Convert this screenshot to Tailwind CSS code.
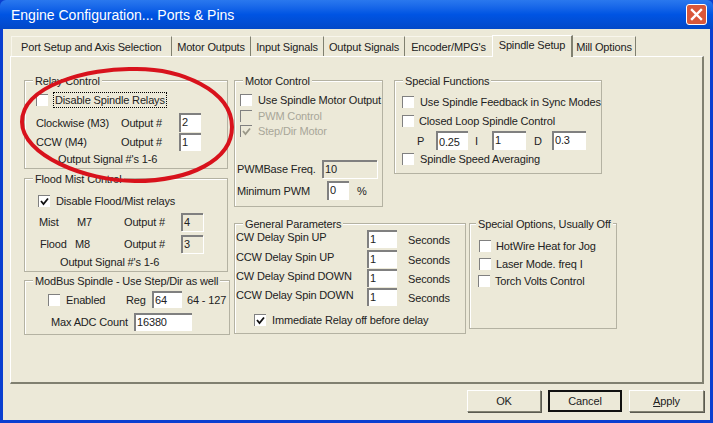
<!DOCTYPE html>
<html lang="en">
<head>
    <meta charset="UTF-8">
    <title>Engine Configuration... Ports &amp; Pins</title>
    <script src="https://cdn.jsdelivr.net/npm/@tailwindcss/browser@4"></script>
</head>
<body class="bg-[#0a3fd0]">
<div class="relative w-[713px] h-[423px] overflow-hidden whitespace-nowrap font-['Liberation_Sans',sans-serif] text-[11px] tracking-[-0.15px] leading-[14px] text-[#222]">
    <!-- Title bar -->
    <div class="h-[29px] flex items-center justify-between pl-[11px] pr-[6px] rounded-t-[6px] bg-gradient-to-b from-[#2a78ee] via-[#0054e3] to-[#0248c8]">
        <span class="text-white text-[14px] tracking-normal">Engine Configuration... Ports &amp; Pins</span>
        <div class="w-[21px] h-[21px] rounded-[3px] border border-white bg-[#d9573a] flex items-center justify-center">
            <svg width="13" height="13" viewBox="0 0 13 13"><path d="M2 2 L11 11 M11 2 L2 11" stroke="#fff" stroke-width="2.4" stroke-linecap="square"/></svg>
        </div>
    </div>

    <!-- Client area -->
    <div class="mx-[3px] h-[391px] bg-[#ece9d8]">
        <!-- Tabs -->
        <div class="flex items-end h-[27px] pl-[8px]">
            <div class="w-[161px] h-[20px] flex items-center pl-[9px] border-t border-l border-t-[#f8f6ec] border-l-[#f8f6ec] border-r border-r-[#808070]">Port Setup and Axis Selection</div>
            <div class="w-[79px] h-[20px] flex items-center justify-center border-t border-t-[#f8f6ec] border-r border-r-[#808070]">Motor Outputs</div>
            <div class="w-[73px] h-[20px] flex items-center justify-center border-t border-t-[#f8f6ec] border-r border-r-[#808070]">Input Signals</div>
            <div class="w-[81px] h-[20px] flex items-center justify-center border-t border-t-[#f8f6ec] border-r border-r-[#808070]">Output Signals</div>
            <div class="w-[87px] h-[20px] flex items-center justify-center border-t border-t-[#f8f6ec]">Encoder/MPG's</div>
            <div class="relative z-10 w-[81px] h-[22px] -mb-px pb-[4px] flex items-center justify-center border-t border-l border-white border-r-2 border-r-[#808070] bg-[#ece9d8]">Spindle Setup</div>
            <div class="w-[63px] h-[20px] flex items-center justify-center border-t border-t-[#f8f6ec] border-r border-r-[#808070]">Mill Options</div>
        </div>

        <!-- Tab page -->
        <div class="ml-[7px] w-[694px] h-[328px] flex pt-[23px] pl-[13px] border-t border-l border-white border-r-2 border-b-2 border-r-[#808070] border-b-[#808070]">
            <!-- Left column -->
            <div class="w-[206px] flex flex-col">
                <div class="relative w-[204px] h-[89px] border border-[#b4b2a2] pl-[11px] shadow-[inset_1px_1px_0_#fff]">
                    <span class="absolute -top-[7px] left-[8px] px-[2px] bg-[#ece9d8]">Relay Control</span>
                    <div class="flex items-center h-[15px] mt-[11px]">
                        <div class="shrink-0 w-[12px] h-[12px] bg-white border-t border-l border-[#808080]"></div>
                        <span class="ml-[5px] border border-dotted border-black px-[1px]">Disable Spindle Relays</span>
                    </div>
                    <div class="flex items-center h-[19px] mt-[6px]">
                        <span class="w-[85px]">Clockwise (M3)</span>
                        <span class="w-[58px]">Output #</span>
                        <div class="w-[22px] h-[19px] bg-white border-t-2 border-l-2 border-[#808080] pl-[1px]">2</div>
                    </div>
                    <div class="flex items-center h-[18px] mt-[1px]">
                        <span class="w-[85px]">CCW (M4)</span>
                        <span class="w-[58px]">Output #</span>
                        <div class="w-[22px] h-[18px] bg-white border-t-2 border-l-2 border-[#808080] pl-[1px]">1</div>
                    </div>
                    <div class="pl-[22px] mt-[1px]">Output Signal #'s 1-6</div>
                </div>

                <div class="relative mt-[9px] w-[204px] h-[94px] border border-[#b4b2a2] pl-[13px] shadow-[inset_1px_1px_0_#fff]">
                    <span class="absolute -top-[7px] left-[8px] px-[2px] bg-[#ece9d8]">Flood Mist Control</span>
                    <div class="flex items-center h-[15px] mt-[14px]">
                        <div class="shrink-0 w-[12px] h-[12px] bg-white border-t border-l border-[#808080] flex items-center justify-center">
                            <svg width="9" height="9" viewBox="0 0 9 9"><path d="M1 4 L3.5 7 L8 1.5" fill="none" stroke="#111" stroke-width="1.8"/></svg>
                        </div>
                        <span class="ml-[6px]">Disable Flood/Mist relays</span>
                    </div>
                    <div class="flex items-center h-[18px] mt-[5px] pl-[1px]">
                        <span class="w-[38px]">Mist</span>
                        <span class="w-[47px]">M7</span>
                        <span class="w-[57px]">Output #</span>
                        <div class="w-[22px] h-[18px] border-t-2 border-l-2 border-[#808080] shadow-[1px_1px_0_#fff] pl-[1px]">4</div>
                    </div>
                    <div class="flex items-center h-[18px] mt-[4px] pl-[2px]">
                        <span class="w-[35px]">Flood</span>
                        <span class="w-[49px]">M8</span>
                        <span class="w-[57px]">Output #</span>
                        <div class="w-[22px] h-[18px] border-t-2 border-l-2 border-[#808080] shadow-[1px_1px_0_#fff] pl-[1px]">3</div>
                    </div>
                    <div class="pl-[22px] mt-[2px]">Output Signal #'s 1-6</div>
                </div>

                <div class="relative mt-[8px] w-[206px] h-[55px] border border-[#b4b2a2] shadow-[inset_1px_1px_0_#fff]">
                    <span class="absolute -top-[7px] left-[8px] px-[2px] bg-[#ece9d8]">ModBus Spindle - Use Step/Dir as well</span>
                    <div class="flex items-center h-[17px] mt-[10px] pl-[23px]">
                        <div class="shrink-0 w-[12px] h-[12px] bg-white border-t border-l border-[#808080]"></div>
                        <span class="ml-[6px] w-[60px]">Enabled</span>
                        <span class="w-[26px]">Reg</span>
                        <div class="w-[30px] h-[17px] bg-white border-t-2 border-l-2 border-[#808080] pl-[1px]">64</div>
                        <span class="ml-[5px]">64 - 127</span>
                    </div>
                    <div class="flex items-center h-[18px] mt-[5px] pl-[26px]">
                        <span class="w-[83px]">Max ADC Count</span>
                        <div class="w-[58px] h-[18px] bg-white border-t-2 border-l-2 border-[#808080] pl-[1px]">16380</div>
                    </div>
                </div>
            </div>

            <!-- Right part -->
            <div class="ml-[4px]">
                <div class="flex h-[143px]">
                    <div class="relative w-[149px] h-[127px] border border-[#b4b2a2] pl-[5px] shadow-[inset_1px_1px_0_#fff]">
                        <span class="absolute -top-[7px] left-[8px] px-[2px] bg-[#ece9d8]">Motor Control</span>
                        <div class="flex items-center h-[15px] mt-[11px]">
                            <div class="shrink-0 w-[12px] h-[12px] bg-white border-t border-l border-[#808080]"></div>
                            <span class="ml-[6px]">Use Spindle Motor Output</span>
                        </div>
                        <div class="flex items-center h-[15px] mt-[1px] text-[#a8a698]">
                            <div class="shrink-0 w-[12px] h-[12px] border-t border-l border-[#808080]"></div>
                            <span class="ml-[6px]">PWM Control</span>
                        </div>
                        <div class="flex items-center h-[15px] text-[#a8a698]">
                            <div class="shrink-0 w-[12px] h-[12px] border-t border-l border-[#808080] flex items-center justify-center">
                                <svg width="9" height="9" viewBox="0 0 9 9"><path d="M1 4 L3.5 7 L8 1.5" fill="none" stroke="#9a9888" stroke-width="1.8"/></svg>
                            </div>
                            <span class="ml-[6px]">Step/Dir Motor</span>
                        </div>
                        <div class="flex items-center h-[18px] mt-[22px] -ml-[3px]">
                            <span class="w-[85px]">PWMBase Freq.</span>
                            <div class="w-[55px] h-[18px] border-t-2 border-l-2 border-[#808080] shadow-[1px_1px_0_#fff] pl-[1px]">10</div>
                        </div>
                        <div class="flex items-center h-[19px] mt-[3px] -ml-[3px]">
                            <span class="w-[90px]">Minimum PWM</span>
                            <div class="w-[22px] h-[19px] bg-white border-t-2 border-l-2 border-[#808080] pl-[1px]">0</div>
                            <span class="ml-[8px]">%</span>
                        </div>
                    </div>

                    <div class="relative ml-[11px] w-[208px] h-[94px] border border-[#b4b2a2] pl-[7px] shadow-[inset_1px_1px_0_#fff]">
                        <span class="absolute -top-[7px] left-[8px] px-[2px] bg-[#ece9d8]">Special Functions</span>
                        <div class="flex items-center h-[15px] mt-[13px]">
                            <div class="shrink-0 w-[12px] h-[12px] bg-white border-t border-l border-[#808080]"></div>
                            <span class="ml-[6px]">Use Spindle Feedback in Sync Modes</span>
                        </div>
                        <div class="flex items-center h-[15px] mt-[4px]">
                            <div class="shrink-0 w-[12px] h-[12px] bg-white border-t border-l border-[#808080]"></div>
                            <span class="ml-[5px]">Closed Loop Spindle Control</span>
                        </div>
                        <div class="flex items-center h-[19px] mt-[3px] pl-[15px]">
                            <span class="w-[19px]">P</span>
                            <div class="w-[32px] h-[19px] bg-white border-t-2 border-l-2 border-[#808080] pl-[1px] pt-[2px]">0.25</div>
                            <span class="ml-[7px] w-[17px]">I</span>
                            <div class="w-[34px] h-[19px] bg-white border-t-2 border-l-2 border-[#808080] pl-[1px]">1</div>
                            <span class="ml-[8px] w-[18px]">D</span>
                            <div class="w-[34px] h-[19px] bg-white border-t-2 border-l-2 border-[#808080] pl-[1px]">0.3</div>
                        </div>
                        <div class="flex items-center h-[15px] mt-[1px]">
                            <div class="shrink-0 w-[12px] h-[12px] bg-white border-t border-l border-[#808080]"></div>
                            <span class="ml-[6px]">Spindle Speed Averaging</span>
                        </div>
                    </div>
                </div>

                <div class="flex">
                    <div class="relative w-[232px] h-[111px] border border-[#b4b2a2] pl-[1px] shadow-[inset_1px_1px_0_#fff]">
                        <span class="absolute -top-[7px] left-[8px] px-[2px] bg-[#ece9d8]">General Parameters</span>
                        <div class="flex h-[18px] mt-[6px]">
                            <span class="w-[131px]">CW Delay Spin UP</span>
                            <div class="w-[30px] h-[18px] bg-white border-t-2 border-l-2 border-[#808080] pl-[1px]">1</div>
                            <span class="ml-[11px] mt-[3px]">Seconds</span>
                        </div>
                        <div class="flex h-[18px] mt-[2px]">
                            <span class="w-[131px]">CCW Delay Spin UP</span>
                            <div class="w-[30px] h-[18px] bg-white border-t-2 border-l-2 border-[#808080] pl-[1px]">1</div>
                            <span class="ml-[11px] mt-[3px]">Seconds</span>
                        </div>
                        <div class="flex h-[18px] mt-[1px]">
                            <span class="w-[131px]">CW Delay Spind DOWN</span>
                            <div class="w-[30px] h-[18px] bg-white border-t-2 border-l-2 border-[#808080] pl-[1px]">1</div>
                            <span class="ml-[11px] mt-[3px]">Seconds</span>
                        </div>
                        <div class="flex h-[18px] mt-[1px]">
                            <span class="w-[131px]">CCW Delay Spin DOWN</span>
                            <div class="w-[30px] h-[18px] bg-white border-t-2 border-l-2 border-[#808080] pl-[1px]">1</div>
                            <span class="ml-[11px] mt-[3px]">Seconds</span>
                        </div>
                        <div class="flex items-center h-[15px] mt-[6px] pl-[18px]">
                            <div class="shrink-0 w-[12px] h-[12px] bg-white border-t border-l border-[#808080] flex items-center justify-center">
                                <svg width="9" height="9" viewBox="0 0 9 9"><path d="M1 4 L3.5 7 L8 1.5" fill="none" stroke="#111" stroke-width="1.8"/></svg>
                            </div>
                            <span class="ml-[6px]">Immediate Relay off before delay</span>
                        </div>
                    </div>

                    <div class="relative ml-[3px] w-[148px] h-[106px] border border-[#b4b2a2] pl-[9px] shadow-[inset_1px_1px_0_#fff]">
                        <span class="absolute -top-[7px] left-[6px] px-[2px] bg-[#ece9d8]">Special Options, Usually Off</span>
                        <div class="flex items-center h-[15px] mt-[14px]">
                            <div class="shrink-0 w-[12px] h-[12px] bg-white border-t border-l border-[#808080]"></div>
                            <span class="ml-[5px]">HotWire Heat for Jog</span>
                        </div>
                        <div class="flex items-center h-[15px] mt-[3px]">
                            <div class="shrink-0 w-[12px] h-[12px] bg-white border-t border-l border-[#808080]"></div>
                            <span class="ml-[5px]">Laser Mode. freq I</span>
                        </div>
                        <div class="flex items-center h-[15px] mt-[2px] -ml-[1px]">
                            <div class="shrink-0 w-[12px] h-[12px] bg-white border-t border-l border-[#808080]"></div>
                            <span class="ml-[5px]">Torch Volts Control</span>
                        </div>
                    </div>
                </div>
            </div>
        </div>

        <!-- Buttons -->
        <div class="flex justify-end gap-[7px] pt-[6px] pr-[6px]">
            <div class="w-[74px] h-[22px] flex items-center justify-center border border-t-white border-l-white border-r-[#808070] border-b-[#808070] shadow-[1px_1px_0_#5a5a50]">OK</div>
            <div class="w-[74px] h-[22px] flex items-center justify-center border-2 border-[#111]">Cancel</div>
            <div class="w-[75px] h-[22px] flex items-center justify-center border border-t-white border-l-white border-r-[#808070] border-b-[#808070] shadow-[1px_1px_0_#5a5a50]"><span><span class="underline">A</span>pply</span></div>
        </div>
    </div>

    <!-- Red hand-drawn ellipse over the screenshot -->
    <svg class="absolute left-0 top-0 pointer-events-none" width="713" height="423" viewBox="0 0 713 423">
        <path d="M133 69 C90 68 22 85 22 122 C22 155 85 181 135 181 C190 181 232 160 232 127 C232 90 180 68 133 69 Z" fill="none" stroke="#d8121c" stroke-width="4"/>
    </svg>
</div>
</body>
</html>
